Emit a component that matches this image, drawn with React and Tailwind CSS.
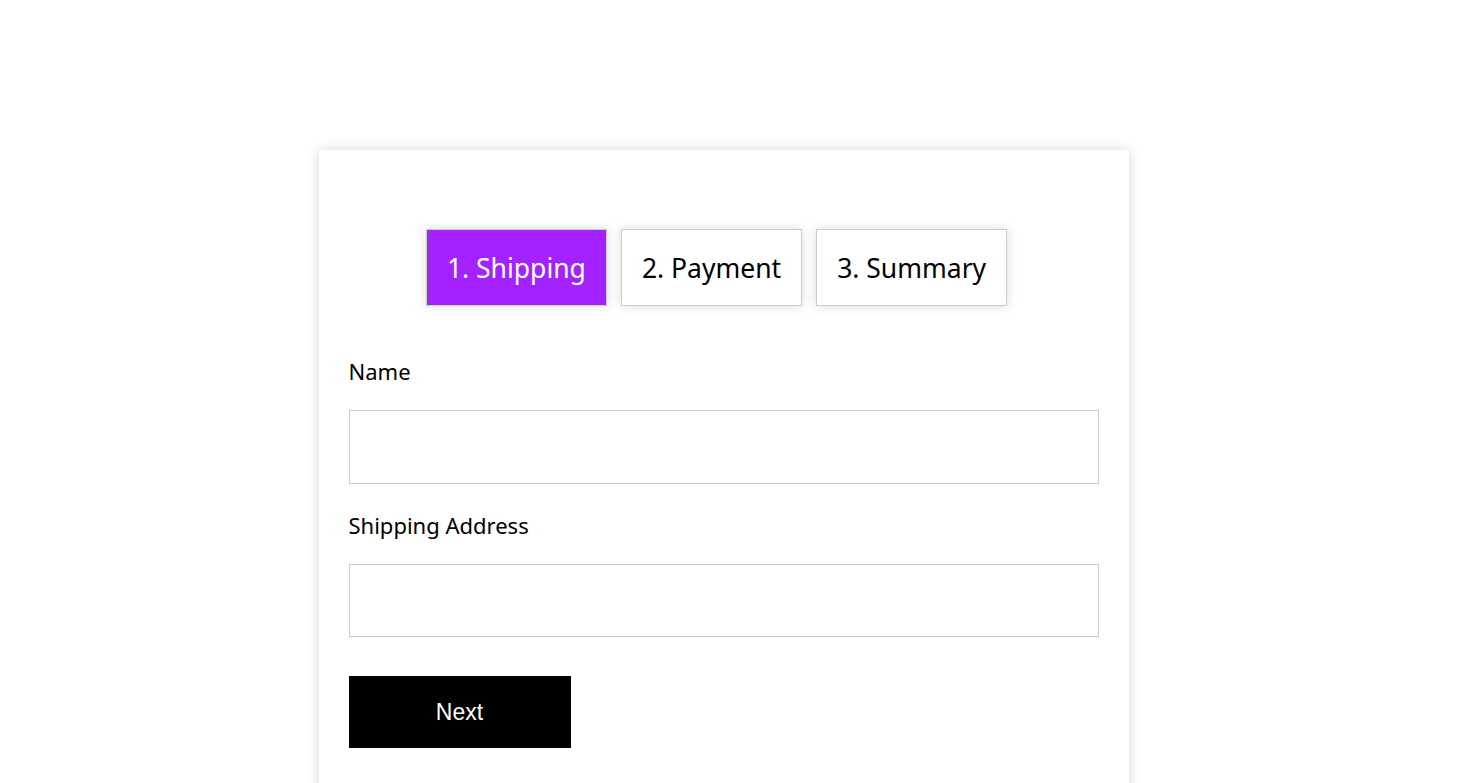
import { useState } from 'react';

const steps = ['1. Shipping', '2. Payment', '3. Summary'];

const Field = ({ label, value, onChange, className = '', inputHeight = 'h-[74px]' }) => (
  <div className={className}>
    <label className="block text-[22px] leading-[30px] text-black">{label}</label>
    <input
      type="text"
      value={value}
      onChange={(e) => onChange(e.target.value)}
      className={`mt-[24px] block w-full ${inputHeight} border border-[#cccccc] bg-white px-3 text-[20px] outline-none`}
    />
  </div>
);

const App = () => {
  const [active, setActive] = useState(0);
  const [name, setName] = useState('');
  const [address, setAddress] = useState('');

  return (
    <div className="min-h-screen bg-white pt-[150px] pb-[150px] pr-[25px] font-['Noto_Sans',sans-serif]">
      <div className="mx-auto w-[810px] bg-white px-[30px] pt-[79px] pb-[70px] shadow-[0_0_12px_rgba(0,0,0,0.16)]">
        <div className="flex justify-center gap-[14px] pr-[14px]">
          {steps.map((step, i) => (
            <button
              key={step}
              onClick={() => setActive(i)}
              className={`h-[77px] px-5 pt-[3px] text-[26.5px] border border-[#cccccc] shadow-[0_0_10px_rgba(0,0,0,0.15)] ${
                i === active ? 'bg-[#a422ff] text-white' : 'bg-white text-black'
              }`}
            >
              {step}
            </button>
          ))}
        </div>

        <Field label="Name" value={name} onChange={setName} className="mt-[50px]" />
        <Field
          label="Shipping Address"
          value={address}
          onChange={setAddress}
          className="mt-[26px]"
          inputHeight="h-[73px]"
        />

        <button
          onClick={() => setActive(Math.min(active + 1, steps.length - 1))}
          className="mt-[39px] block w-[222px] h-[72px] bg-black text-white text-[23px] font-['Liberation_Sans',Arial,sans-serif]"
        >
          Next
        </button>
      </div>
    </div>
  );
};

export default App;
